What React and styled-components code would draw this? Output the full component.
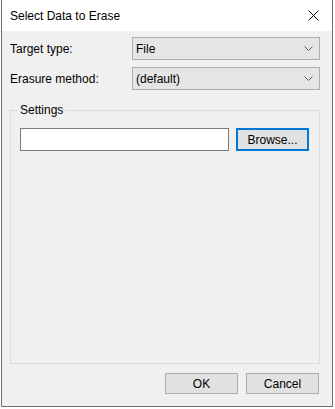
import React from 'react';
import styled, { createGlobalStyle } from 'styled-components';

const GlobalStyle = createGlobalStyle`
    html, body {
        margin: 0;
        padding: 0;
        background: #ffffff;
    }
    body {
        font-family: "Segoe UI", "Liberation Sans", Arial, sans-serif;
        font-size: 12px;
        color: #000000;
    }
`;

const Window = styled.div`
    box-sizing: border-box;
    width: 332px;
    height: 407px;
    margin-left: 1px;
    border: 1px solid #6f6f6f;
    border-top: none;
    background: #f0f0f0;
    display: flex;
    flex-direction: column;
`;

const TitleBar = styled.div`
    height: 31px;
    background: #ffffff;
    display: flex;
    align-items: center;
    justify-content: space-between;
    padding: 0 10px 0 8px;
    flex-shrink: 0;
`;

const Title = styled.span`
    font-size: 12px;
    line-height: 16px;
`;

const CloseButton = styled.div`
    width: 12px;
    height: 12px;
    display: flex;
    align-items: center;
    justify-content: center;
    margin-right: 3px;
`;

const Body = styled.div`
    flex: 1;
    display: flex;
    flex-direction: column;
    padding: 6px 12px 12px 8px;
`;

const FieldRow = styled.div`
    display: flex;
    align-items: center;
    height: 23px;
    margin-bottom: ${p => p.gap || 0}px;
`;

const Label = styled.span`
    width: 122px;
    line-height: 16px;
`;

const Combo = styled.div`
    box-sizing: border-box;
    width: 188px;
    height: 23px;
    border: 1px solid #adadad;
    background: #e5e5e5;
    display: flex;
    align-items: center;
    justify-content: space-between;
    padding: 0 6px 0 3px;
`;

const GroupBox = styled.div`
    position: relative;
    box-sizing: border-box;
    margin-top: 20px;
    height: 254px;
    border: 1px solid #dcdcdc;
    padding: 17px 10px 0 9px;
`;

const GroupTitle = styled.span`
    position: absolute;
    top: -9px;
    left: 7px;
    padding: 0 2px;
    background: #f0f0f0;
    line-height: 16px;
`;

const PathRow = styled.div`
    display: flex;
    gap: 7px;
`;

const TextBox = styled.div`
    box-sizing: border-box;
    width: 209px;
    height: 23px;
    border: 1px solid #7a7a7a;
    background: #ffffff;
`;

const Button = styled.div`
    box-sizing: border-box;
    width: 73px;
    height: ${p => p.h || 21}px;
    border: ${p => (p.focused ? '2px solid #0078d7' : '1px solid #adadad')};
    background: #e1e1e1;
    display: flex;
    align-items: center;
    justify-content: center;
    line-height: 16px;
`;

const Footer = styled.div`
    display: flex;
    justify-content: flex-end;
    gap: 8px;
    margin-top: 9px;
    padding-right: 1px;
`;

const Chevron = () => (
    <svg width="9" height="5" viewBox="0 0 9 5">
        <path d="M0.5 0.5 L4.5 4.5 L8.5 0.5" fill="none" stroke="#606060" strokeWidth="1" />
    </svg>
);

const CloseIcon = () => (
    <svg width="11" height="11" viewBox="0 0 11 11">
        <path d="M0.5 0.5 L10.5 10.5 M10.5 0.5 L0.5 10.5" fill="none" stroke="#000" strokeWidth="1" />
    </svg>
);

export default function App() {
    return (
        <>
            <GlobalStyle />
            <Window>
                <TitleBar>
                    <Title>Select Data to Erase</Title>
                    <CloseButton><CloseIcon /></CloseButton>
                </TitleBar>
                <Body>
                    <FieldRow gap={7}>
                        <Label>Target type:</Label>
                        <Combo><span>File</span><Chevron /></Combo>
                    </FieldRow>
                    <FieldRow>
                        <Label>Erasure method:</Label>
                        <Combo><span>(default)</span><Chevron /></Combo>
                    </FieldRow>
                    <GroupBox>
                        <GroupTitle>Settings</GroupTitle>
                        <PathRow>
                            <TextBox />
                            <Button focused h={23}>Browse...</Button>
                        </PathRow>
                    </GroupBox>
                    <Footer>
                        <Button>OK</Button>
                        <Button>Cancel</Button>
                    </Footer>
                </Body>
            </Window>
        </>
    );
}
